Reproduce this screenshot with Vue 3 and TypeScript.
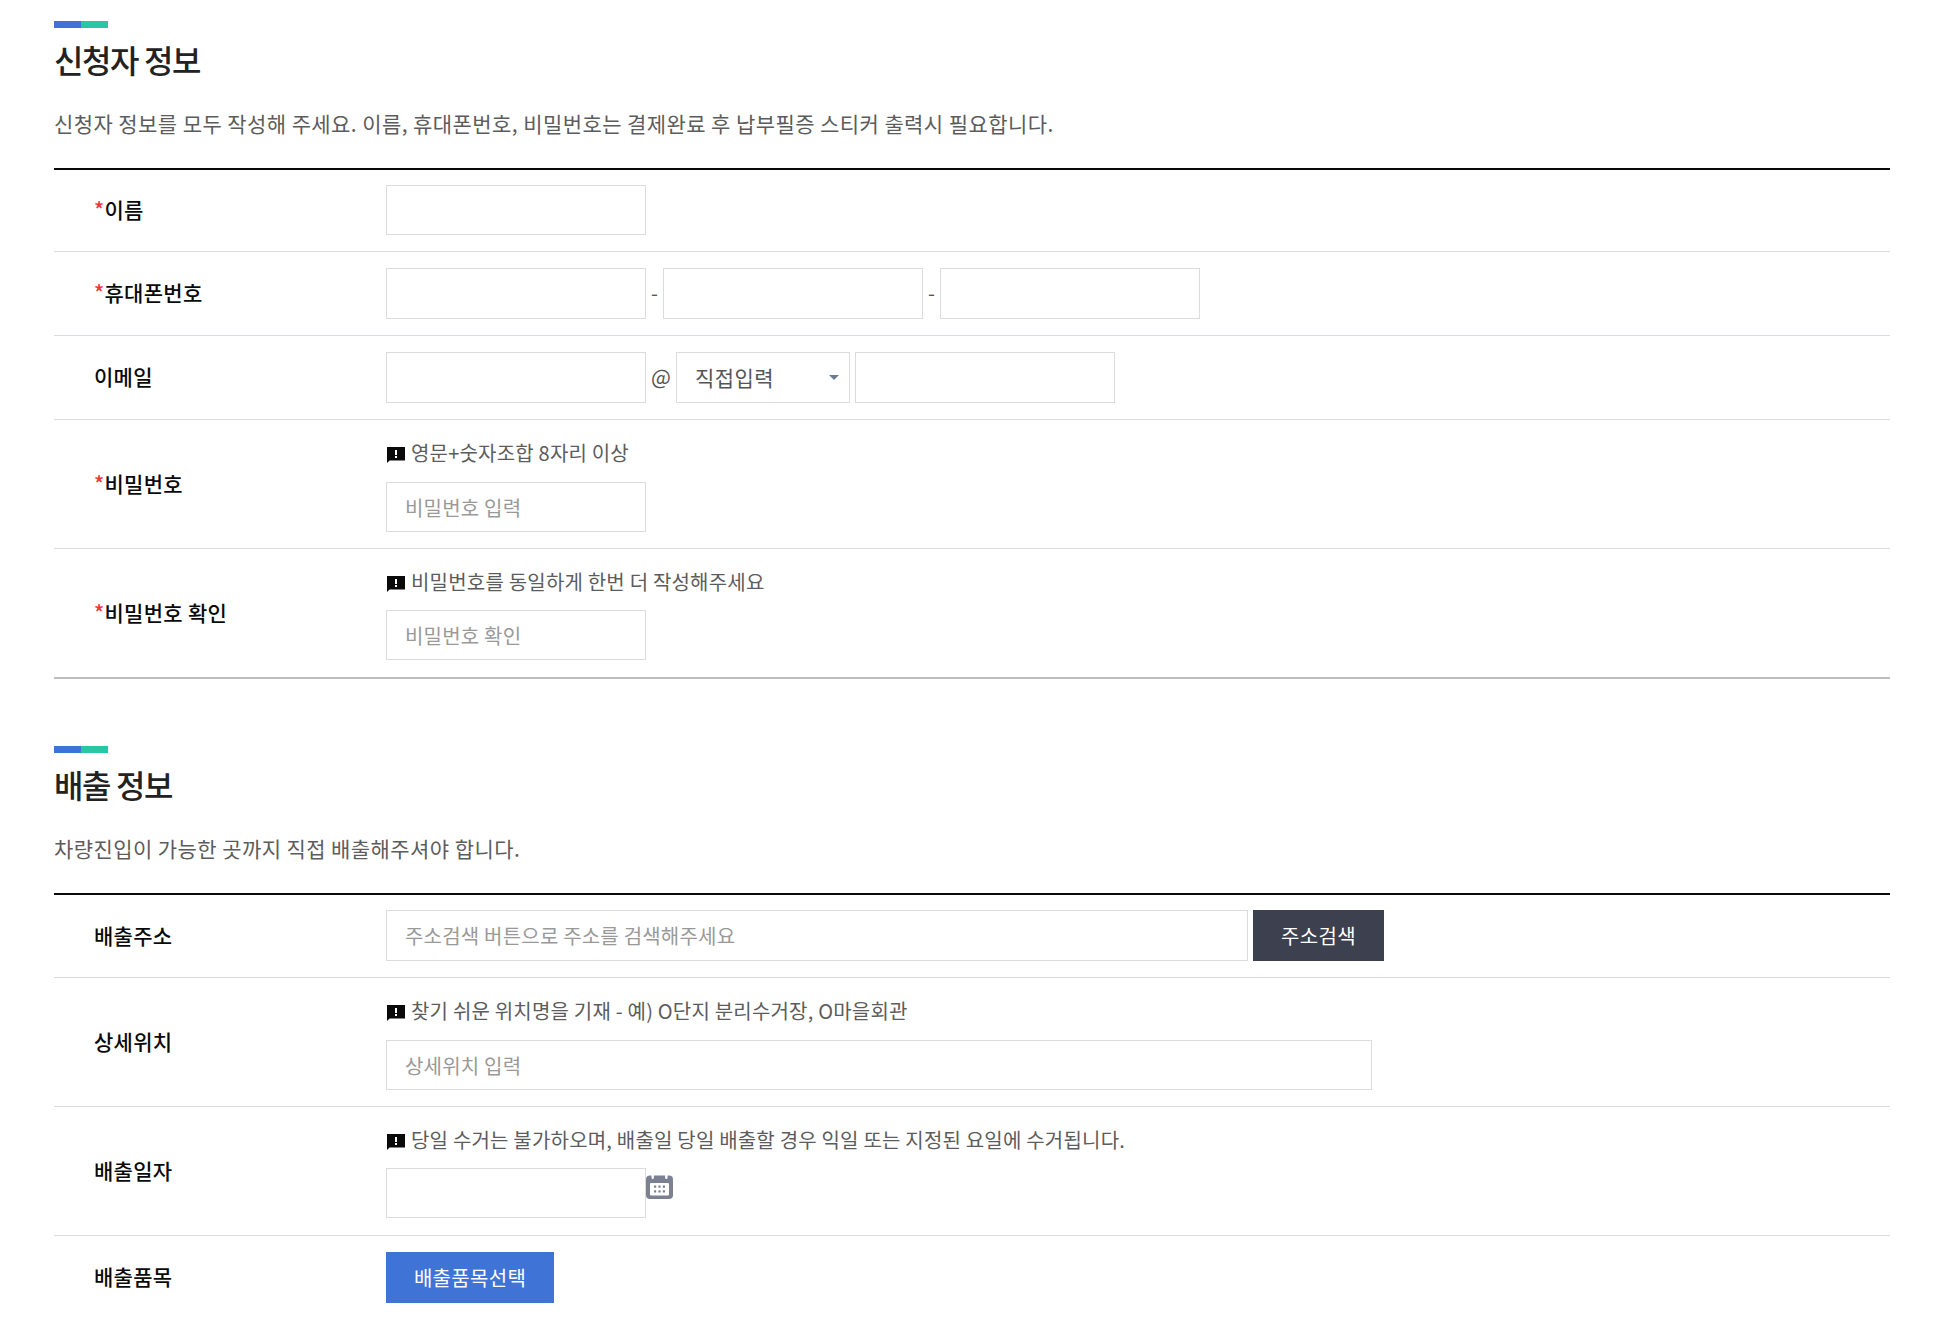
<script setup lang="ts">
const Req = true
</script>

<template>
  <div class="page">
    <section class="sec first">
      <div class="bar"><i class="b"></i><i class="g"></i></div>
      <h2>신청자 정보</h2>
      <p class="desc">신청자 정보를 모두 작성해 주세요. 이름, 휴대폰번호, 비밀번호는 결제완료 후 납부필증 스티커 출력시 필요합니다.</p>
      <div class="table">
        <div class="row top">
          <div class="label"><span class="req" v-if="Req">*</span>이름</div>
          <div class="cell"><div class="line"><input class="inp short" /></div></div>
        </div>
        <div class="row">
          <div class="label"><span class="req">*</span>휴대폰번호</div>
          <div class="cell"><div class="line">
            <input class="inp" /><span class="dash">-</span><input class="inp" /><span class="dash">-</span><input class="inp" />
          </div></div>
        </div>
        <div class="row">
          <div class="label">이메일</div>
          <div class="cell"><div class="line">
            <input class="inp" /><span class="at">@</span>
            <div class="select">직접입력<i class="caret"></i></div>
            <input class="inp mail2" />
          </div></div>
        </div>
        <div class="row tall">
          <div class="label"><span class="req">*</span>비밀번호</div>
          <div class="cell">
            <div class="note"><svg class="ico" viewBox="0 0 18 16"><path d="M0 0h18v13.5H2.6L0 16z" fill="#0a0a0a"/><rect x="8" y="3" width="2" height="5" fill="#fff"/><rect x="8" y="9" width="2" height="2" fill="#fff"/></svg>영문+숫자조합 8자리 이상</div>
            <input class="inp short" placeholder="비밀번호 입력" />
          </div>
        </div>
        <div class="row tall alt">
          <div class="label"><span class="req">*</span>비밀번호 확인</div>
          <div class="cell">
            <div class="note"><svg class="ico" viewBox="0 0 18 16"><path d="M0 0h18v13.5H2.6L0 16z" fill="#0a0a0a"/><rect x="8" y="3" width="2" height="5" fill="#fff"/><rect x="8" y="9" width="2" height="2" fill="#fff"/></svg>비밀번호를 동일하게 한번 더 작성해주세요</div>
            <input class="inp short" placeholder="비밀번호 확인" />
          </div>
        </div>
      </div>
    </section>

    <section class="sec second">
      <div class="bar"><i class="b"></i><i class="g"></i></div>
      <h2>배출 정보</h2>
      <p class="desc">차량진입이 가능한 곳까지 직접 배출해주셔야 합니다.</p>
      <div class="table">
        <div class="row top">
          <div class="label">배출주소</div>
          <div class="cell"><div class="line">
            <input class="inp addr" placeholder="주소검색 버튼으로 주소를 검색해주세요" />
            <button class="btn dark">주소검색</button>
          </div></div>
        </div>
        <div class="row tall">
          <div class="label">상세위치</div>
          <div class="cell">
            <div class="note"><svg class="ico" viewBox="0 0 18 16"><path d="M0 0h18v13.5H2.6L0 16z" fill="#0a0a0a"/><rect x="8" y="3" width="2" height="5" fill="#fff"/><rect x="8" y="9" width="2" height="2" fill="#fff"/></svg>찾기 쉬운 위치명을 기재 - 예) O단지 분리수거장, O마을회관</div>
            <input class="inp short wide" placeholder="상세위치 입력" />
          </div>
        </div>
        <div class="row tall alt">
          <div class="label">배출일자</div>
          <div class="cell">
            <div class="note"><svg class="ico" viewBox="0 0 18 16"><path d="M0 0h18v13.5H2.6L0 16z" fill="#0a0a0a"/><rect x="8" y="3" width="2" height="5" fill="#fff"/><rect x="8" y="9" width="2" height="2" fill="#fff"/></svg>당일 수거는 불가하오며, 배출일 당일 배출할 경우 익일 또는 지정된 요일에 수거됩니다.</div>
            <div class="date">
              <input class="inp short" />
              <svg class="cal" viewBox="0 0 27 25">
                <rect x="0" y="1.5" width="27" height="23.5" rx="4" fill="#7b8191"/>
                <rect x="4" y="9" width="19" height="12.5" rx="1" fill="#fff"/>
                <rect x="5.5" y="0" width="2.4" height="5" rx="1.2" fill="#fff"/>
                <rect x="19.1" y="0" width="2.4" height="5" rx="1.2" fill="#fff"/>
                <g fill="#7b8191">
                  <rect x="8" y="11.5" width="2.2" height="2.2"/><rect x="12.4" y="11.5" width="2.2" height="2.2"/><rect x="16.8" y="11.5" width="2.2" height="2.2"/>
                  <rect x="8" y="16.3" width="2.2" height="2.2"/><rect x="12.4" y="16.3" width="2.2" height="2.2"/><rect x="16.8" y="16.3" width="2.2" height="2.2"/>
                </g>
              </svg>
            </div>
          </div>
        </div>
        <div class="row">
          <div class="label">배출품목</div>
          <div class="cell"><div class="line"><button class="btn blue">배출품목선택</button></div></div>
        </div>
      </div>
    </section>
  </div>
</template>

<style>
html, body { background: #fff; overflow: hidden; }
</style>

<style scoped>
.page {
  height: 1317px;
  overflow: hidden;
  padding: 21px 57px 0 54px;
  font-family: "Noto Sans CJK KR", "Noto Sans", sans-serif;
  color: #555;
}
.bar { display: flex; height: 7px; width: 54px; }
.bar i { flex: 1; display: block; }
.b { background: #3f74d6; }
.g { background: #27c6a5; }
h2 {
  margin: 9px 0 0;
  font-size: 32px;
  line-height: 44px;
  font-weight: 500;
  color: #222;
  letter-spacing: -1.4px;
}
.desc {
  margin: 27px 0 0;
  font-size: 21px;
  line-height: 30px;
  color: #5c5c5c;
  letter-spacing: 0.42px;
}
.table { margin-top: 30px; border-top: 2px solid #0a0a0a; border-bottom: 2px solid #bcbcc4; }
.second { margin-top: 67px; }
.second .table { border-bottom: 0; }
.row {
  display: flex;
  align-items: center;
  border-bottom: 1px solid #dcdce2;
}
.row:nth-last-child(1) { border-bottom: 0; }
.label {
  width: 332px;
  flex: none;
  padding: 0 0 3px 40px;
  box-sizing: border-box;
  font-size: 21px;
  font-weight: 500;
  color: #0a0a0a;
  letter-spacing: 0.3px;
}
.req { color: #f0343a; }
.cell { flex: 1; min-width: 0; padding: 16px 0; }
.top .cell { padding-top: 15px; }
.line { display: flex; align-items: center; }
.inp {
  display: block;
  box-sizing: border-box;
  width: 260px;
  height: 51px;
  padding: 0 18px;
  border: 1px solid #dcdcdc;
  border-radius: 0;
  background: #fff;
  outline: none;
  font: 400 20px "Noto Sans CJK KR", sans-serif;
  letter-spacing: 0.2px;
  color: #555;
}
.short { height: 50px; }
.inp::placeholder { color: #999; opacity: 1; }
.dash { width: 17px; padding-bottom: 3px; text-align: center; font-size: 20px; color: #555; }
.at { width: 30px; padding-bottom: 3px; text-align: center; font-size: 21px; color: #555; }
.select {
  position: relative;
  box-sizing: border-box;
  width: 174px;
  height: 51px;
  margin-right: 5px;
  padding-left: 18px;
  border: 1px solid #dcdcdc;
  font-size: 21px;
  line-height: 49px;
  letter-spacing: 0.4px;
  color: #555;
}
.caret {
  position: absolute;
  right: 10px;
  top: 22px;
  border: 5px solid transparent;
  border-top: 5px solid #6b7b90;
  border-bottom: 0;
}
.note {
  display: flex;
  align-items: center;
  height: 28px;
  margin-top: 3px;
  margin-bottom: 15px;
  font-size: 20px;
  line-height: 28px;
  color: #5c5c5c;
  letter-spacing: 0.2px;
}
.alt .cell { padding-bottom: 17px; }
.alt .note { margin-bottom: 14px; }
.ico { width: 18px; height: 16px; margin: 4px 6px 0 1px; flex: none; }
.addr { width: 862px; margin-right: 5px; }
.wide { width: 986px; }
.btn {
  border: 0;
  font: 400 20px "Noto Sans CJK KR", sans-serif;
  letter-spacing: 0.3px;
  color: #fff;
  height: 51px;
  padding: 0;
}
.dark { width: 131px; background: #3c404f; }
.blue { width: 168px; background: #3f74d6; }
.date { display: flex; align-items: flex-start; }
.cal { width: 27px; height: 25px; margin-top: 6px; flex: none; }
</style>
